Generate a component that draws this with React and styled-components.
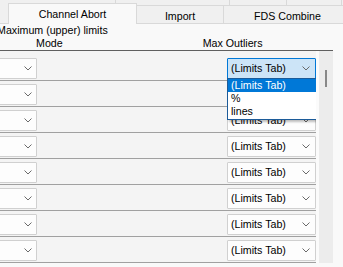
import React from "react";
import styled, { createGlobalStyle } from "styled-components";

const Global = createGlobalStyle`
  html, body { margin: 0; padding: 0; background: #f9f9f9; }
`;

const Root = styled.div`
  width: 343px;
  height: 267px;
  overflow: hidden;
  background: #f9f9f9;
  font-family: "Liberation Sans", Arial, sans-serif;
  font-size: 10.67px;
  color: #000;
`;

const TabStrip = styled.div`
  height: 24px;
  background: #f0f0f0;
  display: flex;
  flex-direction: column;
`;

const BackRow = styled.div`
  display: flex;
  height: 5px;
`;

const BackTab = styled.div`
  box-sizing: border-box;
  flex: 0 0 ${(p) => p.$w}px;
  border-right: 1px solid #d9d9d9;
`;

const FrontRow = styled.div`
  display: flex;
  height: 19px;
`;

const TabSpacer = styled.div`
  box-sizing: border-box;
  flex: 0 0 8px;
  border-bottom: 1px solid #d9d9d9;
`;

const Tab = styled.div`
  box-sizing: border-box;
  flex: 0 0 ${(p) => p.$w}px;
  height: ${(p) => (p.$active ? 21 : 19)}px;
  margin-top: ${(p) => (p.$active ? -2 : 0)}px;
  padding-top: 4px;
  line-height: 13px;
  text-align: center;
  white-space: nowrap;
  background: ${(p) => (p.$active ? "#f9f9f9" : "#f0f0f0")};
  border: 1px solid #d9d9d9;
  border-left: ${(p) => (p.$active ? "1px solid #d9d9d9" : "none")};
  border-bottom: ${(p) => (p.$active ? "none" : "1px solid #d9d9d9")};
  position: relative;
  z-index: ${(p) => (p.$active ? 1 : 0)};
`;

const Labels = styled.div`
  line-height: 13px;
  white-space: nowrap;
`;

const Title = styled.div`
  margin-left: -3px;
`;

const HeaderRow = styled.div`
  display: flex;
  height: 13px;
`;

const HeaderCell = styled.div`
  margin-left: ${(p) => p.$ml}px;
`;

const Grid = styled.div`
  width: 333px;
  height: 212px;
  border-top: 1px solid #5f5f5f;
  box-shadow: inset 0 1px 0 #9a9a9a;
  display: flex;
`;

const Rows = styled.div`
  box-sizing: border-box;
  flex: 0 0 316px;
  padding-top: 4px;
  background: #f4f4f4;
  overflow: hidden;
`;

const Gap = styled.div`
  flex: 0 0 3px;
  background: #fbfbfb;
`;

const ScrollTrack = styled.div`
  flex: 0 0 14px;
  background: #ececec;
`;

const Thumb = styled.div`
  width: 2px;
  height: 17px;
  margin: 19px 0 0 6px;
  background: #888;
`;

const Row = styled.div`
  box-sizing: border-box;
  height: 26px;
  padding-top: 3px;
  border-bottom: 1px solid #a0a0a0;
  display: flex;
  align-items: flex-start;
`;

const Combo = styled.div`
  box-sizing: border-box;
  position: relative;
  flex: 0 0 ${(p) => p.$w}px;
  margin-left: ${(p) => p.$ml}px;
  height: 21px;
  border: 1px solid ${(p) => (p.$focus ? "#0078d7" : "#d0d0d0")};
  border-radius: 1px;
  background: ${(p) => (p.$focus ? "#cce4f7" : "#fdfdfd")};
  display: flex;
  align-items: center;
  padding: 0 0 0 3px;
  line-height: 19px;
  white-space: nowrap;
`;

const ComboText = styled.span`
  flex: 1;
`;

const Chevron = styled.svg`
  flex: 0 0 8px;
  margin-right: ${(p) => p.$mr}px;
`;

const List = styled.div`
  position: absolute;
  left: -1px;
  top: 19px;
  width: 90px;
  box-sizing: border-box;
  border: 1px solid #1c5b99;
  background: #fff;
  padding-bottom: 1px;
  box-shadow: 2px 2px 2px rgba(0, 0, 0, 0.25);
  z-index: 5;
`;

const Item = styled.div`
  height: 13px;
  line-height: 13px;
  padding-left: 3px;
  background: ${(p) => (p.$sel ? "#0078d7" : "#fff")};
  color: ${(p) => (p.$sel ? "#fff" : "#000")};
`;

const ChevronIcon = ({ mr }) => (
  <Chevron $mr={mr} width="8" height="5" viewBox="0 0 8 5">
    <polyline points="0.5,0.5 4,4 7.5,0.5" fill="none" stroke="#6a6a6a" strokeWidth="1" />
  </Chevron>
);

const rows = [0, 1, 2, 3, 4, 5, 6, 7];

export default function App() {
  return (
    <Root>
      <Global />
      <TabStrip>
        <BackRow>
          <BackTab $w={116} />
          <BackTab $w={114} />
          <BackTab $w={57} />
          <BackTab $w={55} />
        </BackRow>
        <FrontRow>
          <TabSpacer />
          <Tab $active $w={129}>Channel Abort</Tab>
          <Tab $w={87}>Import</Tab>
          <Tab $w={128}>FDS Combine</Tab>
        </FrontRow>
      </TabStrip>
      <Labels>
        <Title>Maximum (upper) limits</Title>
        <HeaderRow>
          <HeaderCell $ml={36}>Mode</HeaderCell>
          <HeaderCell $ml={140}>Max Outliers</HeaderCell>
        </HeaderRow>
      </Labels>
      <Grid>
        <Rows>
          {rows.map((i) => (
            <Row key={i}>
              <Combo $w={90} $ml={-53}>
                <ComboText />
                <ChevronIcon mr={4} />
              </Combo>
              <Combo $w={89} $ml={190} $focus={i === 0}>
                <ComboText>(Limits Tab)</ComboText>
                <ChevronIcon mr={5} />
                {i === 0 && (
                  <List>
                    <Item $sel>(Limits Tab)</Item>
                    <Item>%</Item>
                    <Item>lines</Item>
                  </List>
                )}
              </Combo>
            </Row>
          ))}
        </Rows>
        <Gap />
        <ScrollTrack>
          <Thumb />
        </ScrollTrack>
      </Grid>
    </Root>
  );
}
